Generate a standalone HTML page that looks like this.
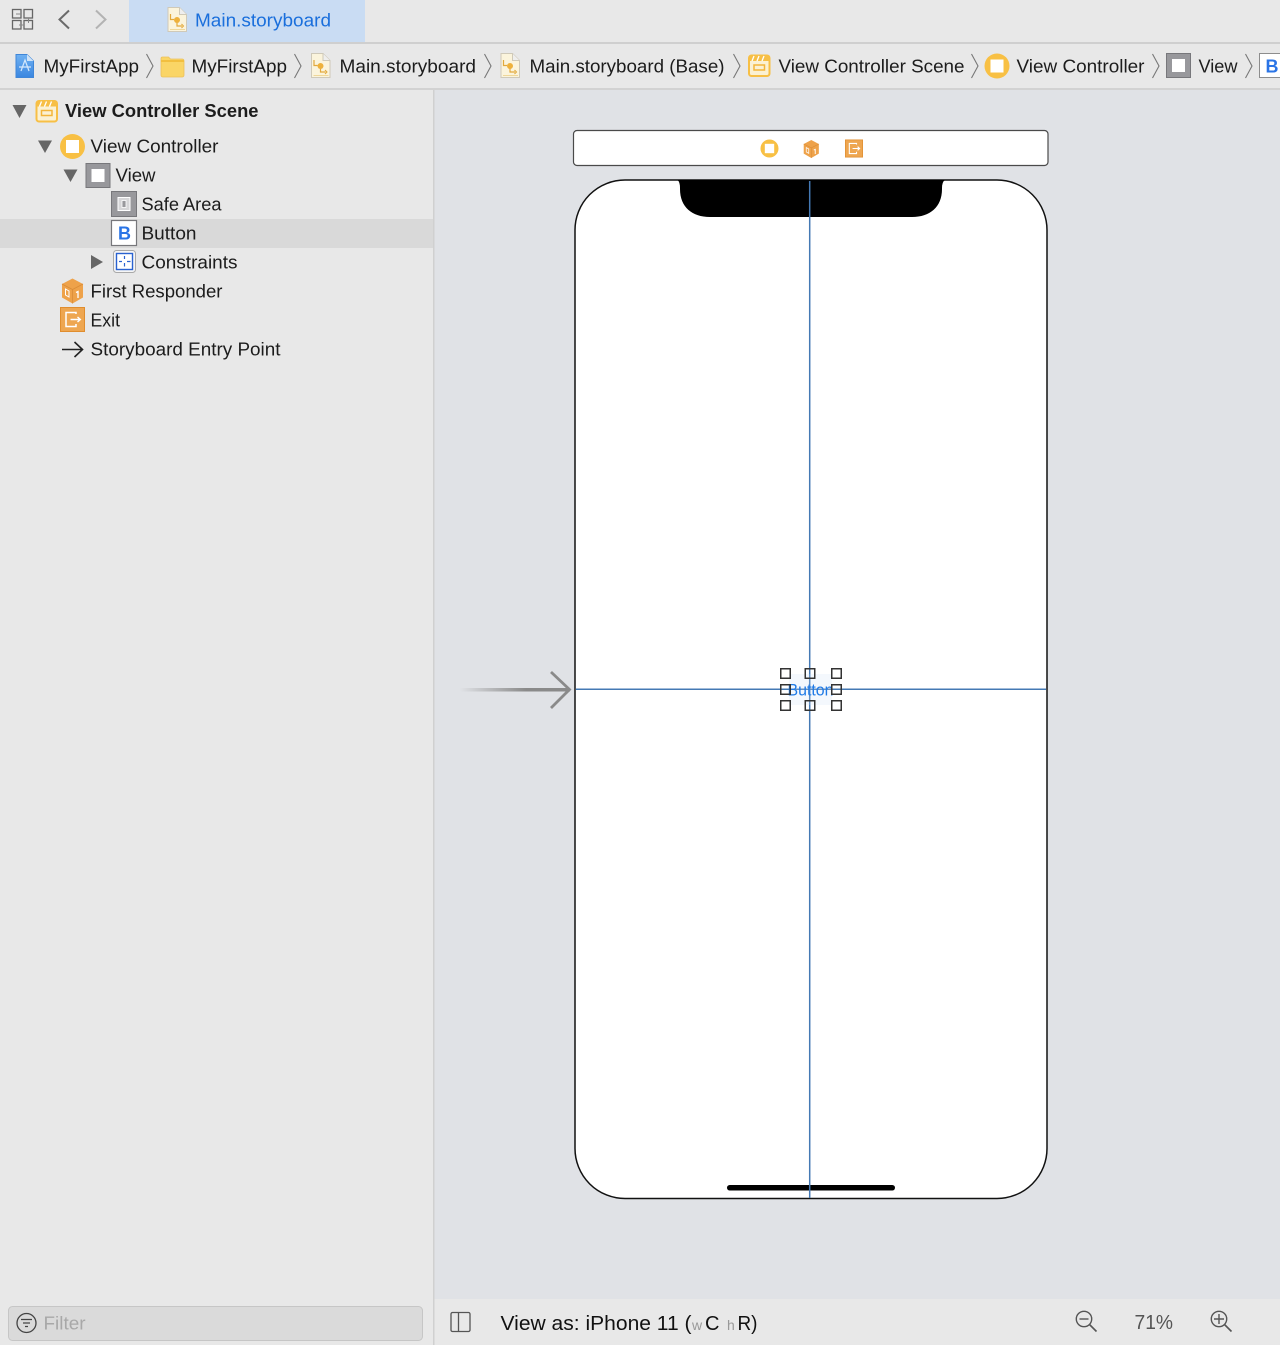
<!DOCTYPE html>
<html lang="en"><head><meta charset="utf-8"><title>Main.storyboard</title>
<style>
html,body{margin:0;padding:0;background:#e8e8e8}
svg{display:block}
text{font-family:"Liberation Sans",sans-serif;font-size:18px;fill:#1c1c1c}
</style></head><body>
<svg xmlns="http://www.w3.org/2000/svg" width="1280" height="1345" viewBox="0 0 1280 1345">
<defs>
<linearGradient id="tail" x1="0" x2="1" y1="0" y2="0"><stop offset="0" stop-color="#8a8a8a" stop-opacity="0"/><stop offset=".6" stop-color="#8a8a8a"/><stop offset="1" stop-color="#8a8a8a"/></linearGradient>
<linearGradient id="blue" x1="0" x2="0" y1="0" y2="1"><stop offset="0" stop-color="#6fb1f2"/><stop offset="1" stop-color="#3a86e0"/></linearGradient>
<g id="doc"><path d="M1.500 .5H13L20 7.500V24.500H1.500Z" fill="#fbf4dc" stroke="#cfc9b8"/><path d="M13 .5V7.500H20" fill="#eee" stroke="#cfc9b8"/><path d="M4 7V12.500H7.500M10.500 13V19H15.500" fill="none" stroke="#e2a93c" stroke-width="1.200"/><circle cx="10.500" cy="13" r="3" fill="#eeb13c"/><path d="M15 17l2 2-2 2" fill="none" stroke="#e2a93c"/><path d="M3.500 22.500H18.500" stroke="#efd79a"/></g>
<g id="sep"><path d="M.5 0L7 12L.5 24" fill="none" stroke="#777" stroke-width="1.100"/></g>
<g id="scene"><rect x="1" y="1" width="20.500" height="20.500" rx="2.500" fill="#fbf1d2" stroke="#f7bf45" stroke-width="2"/><path d="M1 1H21.500V6.500H1Z" fill="#f7bf45"/><path d="M4 6.500L6 1.500M9 6.500L11 1.500M14 6.500L16 1.500" stroke="#fff" stroke-width="1.300"/><rect x="6" y="10.500" width="10.500" height="5" fill="none" stroke="#f3b53a" stroke-width="1.500"/></g>
<g id="vc"><circle cx="12.500" cy="12.500" r="12.500" fill="#f8c044"/><rect x="6" y="6" width="13" height="13" fill="#fff"/></g>
<g id="view"><rect x="0" y="0" width="25" height="25" fill="#98989c"/><rect x=".5" y=".5" width="24" height="24" fill="none" stroke="#77777b"/><rect x="6" y="6" width="13" height="13" fill="#fff"/></g>
<g id="cube"><path d="M11.500 0L22 5.500V19L11.500 25L1 19V5.500Z" fill="#eea24a"/><path d="M1 5.500L11.500 11V25M22 5.500L11.500 11" fill="none" stroke="#d98c38" stroke-width=".8"/><path d="M4.500 10.500L8 12.500V18.500L4.500 16.500Z" fill="none" stroke="#fff" stroke-width="1"/><path d="M15 14l2-1V19.500" fill="none" stroke="#fff" stroke-width="1.300"/></g>
<g id="exit"><rect x="0" y="0" width="25" height="25" fill="#eea650"/><rect x=".5" y=".5" width="24" height="24" fill="none" stroke="#e08d2e"/><path d="M16 7V5.500H6V19.500H16V17" fill="none" stroke="#fff" stroke-width="1.500"/><path d="M10.500 12.500H20M17.500 10l2.800 2.500-2.800 2.500" fill="none" stroke="#fff" stroke-width="1.500"/></g>
<g id="lens"><circle cx="9" cy="9" r="7.700" fill="none" stroke="#555" stroke-width="1.400"/><path d="M14.500 14.500L21.500 21.500" stroke="#555" stroke-width="1.600"/></g>
</defs>

<rect width="1280" height="1345" fill="#e8e8e8"/>
<!-- top tab bar -->
<rect x="129" y="0" width="236" height="42" fill="#c9dcf3"/>
<rect y="42" width="1280" height="2" fill="#cfcfcf"/>
<g fill="none" stroke="#666" stroke-width="1.300">
<rect x="12.500" y="9.500" width="8.500" height="8.500"/><rect x="24" y="9.500" width="8.500" height="8.500"/><rect x="12.500" y="20.500" width="8.500" height="8.500"/><rect x="24" y="20.500" width="8.500" height="8.500"/>
</g>
<path d="M16 14H21M28.500 18V23M24 25H19" fill="none" stroke="#888" stroke-width="1"/>
<path d="M69 10.500L59.500 19.500L69 28.500" fill="none" stroke="#6a6a6a" stroke-width="2"/>
<path d="M96 10.500L105.500 19.500L96 28.500" fill="none" stroke="#b3b3b3" stroke-width="2"/>
<use href="#doc" x="166.500" y="7"/>
<text x="195" y="26.500" textLength="136" lengthAdjust="spacingAndGlyphs" style="fill:#1a6fdc">Main.storyboard</text>

<!-- breadcrumb -->
<rect y="88" width="1280" height="2" fill="#d2d2d2"/>
<path d="M16 54.500H27L33.500 61V77.500H16Z" fill="url(#blue)" stroke="#3f86d8"/><path d="M27 54.500V61H33.500" fill="#cfe3f8"/>
<path d="M21 71L25 60L29 71M19 67H31" fill="none" stroke="#d5e8fb" stroke-width="1.200"/>
<text x="43.500" y="72.500" textLength="95.500" lengthAdjust="spacingAndGlyphs">MyFirstApp</text>
<use href="#sep" x="146" y="54"/>
<path d="M161 58.500q0-1.500 1.500-1.500h6l2 2h11.500q2 0 2 2v14q0 2-2 2h-19q-2 0-2-2z" fill="#fad566" stroke="#ecc05a" stroke-width=".8"/><rect x="161" y="60" width="23" height="2" fill="#f2bf3f"/>
<text x="191.500" y="72.500" textLength="95.500" lengthAdjust="spacingAndGlyphs">MyFirstApp</text>
<use href="#sep" x="294" y="54"/>
<use href="#doc" x="310" y="53"/>
<text x="339.500" y="72.500" textLength="136.500" lengthAdjust="spacingAndGlyphs">Main.storyboard</text>
<use href="#sep" x="484" y="54"/>
<use href="#doc" x="499.500" y="53"/>
<text x="529.500" y="72.500" textLength="195" lengthAdjust="spacingAndGlyphs">Main.storyboard (Base)</text>
<use href="#sep" x="733" y="54"/>
<use href="#scene" x="748" y="54.500"/>
<text x="778.500" y="72.500" textLength="186" lengthAdjust="spacingAndGlyphs">View Controller Scene</text>
<use href="#sep" x="971" y="54"/>
<use href="#vc" x="984.500" y="53.500"/>
<text x="1016.500" y="72.500" textLength="128" lengthAdjust="spacingAndGlyphs">View Controller</text>
<use href="#sep" x="1152" y="54"/>
<use href="#view" x="1166" y="53"/>
<text x="1198.500" y="72.500" textLength="39" lengthAdjust="spacingAndGlyphs">View</text>
<use href="#sep" x="1245" y="54"/>
<rect x="1259.500" y="53.500" width="30" height="24" fill="#fff" stroke="#8d8d8d"/>
<text x="1265.500" y="72.500" style="fill:#2a74e6;font-weight:bold">B</text>

<!-- canvas -->
<rect x="433" y="90" width="847" height="1209" fill="#e0e2e6"/>
<rect x="433" y="90" width="1.500" height="1255" fill="#d0d0d0"/>

<!-- outline -->
<rect x="0" y="219" width="433" height="29" fill="#d9d9d9"/>
<g fill="#666">
<path d="M12.500 105H26.500L19.500 118Z"/>
<path d="M38 140.500H52L45 153Z"/>
<path d="M63.500 169.500H77.500L70.500 182Z"/>
<path d="M91 255V269L103 262Z"/>
</g>
<use href="#scene" x="35.500" y="100"/>
<text x="65" y="117" textLength="193.500" lengthAdjust="spacingAndGlyphs" style="font-weight:bold">View Controller Scene</text>
<use href="#vc" x="60" y="134"/>
<text x="90.500" y="152.500" textLength="128" lengthAdjust="spacingAndGlyphs">View Controller</text>
<use href="#view" x="85.500" y="163"/>
<text x="115.500" y="181.500" textLength="40" lengthAdjust="spacingAndGlyphs">View</text>
<rect x="111.500" y="191.500" width="25" height="25" fill="#98989c" stroke="#77777b"/>
<rect x="118" y="197.500" width="12" height="13" fill="#d6d6d8" stroke="#fff"/><rect x="122" y="200.500" width="4" height="7" fill="#98989c" stroke="#fff" stroke-width=".8"/>
<text x="141.500" y="210.500" textLength="80" lengthAdjust="spacingAndGlyphs">Safe Area</text>
<rect x="111.500" y="220.500" width="25" height="25" fill="#fff" stroke="#77777b" stroke-width="1.200"/>
<text x="118" y="239.500" style="fill:#2a74e6;font-weight:bold">B</text>
<text x="141.500" y="239.500" textLength="55" lengthAdjust="spacingAndGlyphs">Button</text>
<rect x="113.500" y="250.500" width="22" height="22" rx="3" fill="#f6f6f6" stroke="#a9a9a9"/>
<rect x="116.500" y="253.500" width="16" height="16" fill="#fff" stroke="#2a62d0" stroke-width="1.400"/>
<path d="M124.500 256v3M124.500 263v3.500M119 261.500h3M127 261.500h3.500" stroke="#2a62d0" stroke-width="1.200"/>
<text x="141.500" y="268.500" textLength="96" lengthAdjust="spacingAndGlyphs">Constraints</text>
<use href="#cube" x="61" y="278.500"/>
<text x="90.500" y="297.500" textLength="132" lengthAdjust="spacingAndGlyphs">First Responder</text>
<use href="#exit" x="60" y="307"/>
<text x="90.500" y="326.500" textLength="29.500" lengthAdjust="spacingAndGlyphs">Exit</text>
<path d="M62 349.500H82M74.500 342L82.500 349.500L74.500 357" fill="none" stroke="#222" stroke-width="1.600"/>
<text x="90.500" y="355.500" textLength="190" lengthAdjust="spacingAndGlyphs">Storyboard Entry Point</text>

<!-- scene dock -->
<rect x="573.500" y="130.500" width="474.500" height="35" rx="3.500" fill="#fff" stroke="#4a4a4a" stroke-width="1.200"/>
<g transform="translate(760.500,139.500) scale(.72)"><use href="#vc"/></g>
<g transform="translate(803,140) scale(.72)"><use href="#cube"/></g>
<g transform="translate(845,139.500) scale(.72)"><use href="#exit"/></g>

<!-- device -->
<rect x="575" y="180" width="472" height="1018.500" rx="50" fill="#fff" stroke="#111" stroke-width="1.500"/>
<path d="M677.500 180H945Q942 182 942 188V189C942 207 930 217 912 217H710C692 217 680 207 680 189V188Q680 182 677.500 180Z" fill="#000"/>
<rect x="727" y="1185" width="168" height="5.500" rx="2.750" fill="#000"/>

<!-- guides -->
<path d="M809.700 181V1198" stroke="#4479b4" stroke-width="1.500"/>
<path d="M576 689.300H1046" stroke="#4479b4" stroke-width="1.500"/>
<rect x="789" y="674" width="43" height="31" fill="#cfe0f4" opacity=".22"/>
<text x="787.500" y="695.500" textLength="46" lengthAdjust="spacingAndGlyphs" style="fill:#1f7ae6;font-size:17px">Button</text>
<g fill="none" stroke="#333" stroke-width="1.500">
<rect x="780.750" y="668.750" width="9.500" height="9.500"/><rect x="805.250" y="668.750" width="9.500" height="9.500"/><rect x="831.750" y="668.750" width="9.500" height="9.500"/>
<rect x="780.750" y="684.750" width="9.500" height="9.500"/><rect x="831.750" y="684.750" width="9.500" height="9.500"/>
<rect x="780.750" y="700.750" width="9.500" height="9.500"/><rect x="805.250" y="700.750" width="9.500" height="9.500"/><rect x="831.750" y="700.750" width="9.500" height="9.500"/>
</g>

<!-- entry arrow -->
<rect x="460" y="688" width="110" height="3.500" fill="url(#tail)"/>
<path d="M551 672L569.500 689.500L551 708" fill="none" stroke="#8a8a8a" stroke-width="2.800"/>

<!-- bottom bars -->
<rect x="434.500" y="1299" width="845.500" height="46" fill="#e8e8e8"/>
<rect x="8.500" y="1306.500" width="414" height="34" rx="4" fill="#dadada" stroke="#c6c6c6"/>
<circle cx="26.500" cy="1323" r="9.500" fill="none" stroke="#444" stroke-width="1.300"/>
<path d="M21 1319.500H32M23 1323H30M25 1326.500H28" stroke="#444" stroke-width="1.300"/>
<text x="43.500" y="1329.500" textLength="42" lengthAdjust="spacingAndGlyphs" style="fill:#a8a8a8">Filter</text>
<rect x="451" y="1312.500" width="19" height="19" rx="1.500" fill="none" stroke="#555" stroke-width="1.300"/>
<path d="M458.500 1312.500V1331.500" stroke="#555" stroke-width="1.300"/>
<text x="500.500" y="1330" textLength="191" lengthAdjust="spacingAndGlyphs" style="font-size:20px;fill:#111">View as: iPhone 11 (</text>
<text x="692" y="1330" style="font-size:14px;fill:#999">w</text>
<text x="705" y="1330" style="font-size:20px;fill:#111">C</text>
<text x="727" y="1330" style="font-size:14px;fill:#999">h</text>
<text x="737.500" y="1330" textLength="20" lengthAdjust="spacingAndGlyphs" style="font-size:20px;fill:#111">R)</text>
<use href="#lens" x="1075" y="1310"/>
<path d="M1079.500 1319H1088.500" stroke="#555" stroke-width="1.400"/>
<text x="1134.500" y="1329" textLength="38.500" lengthAdjust="spacingAndGlyphs" style="font-size:20px;fill:#555">71%</text>
<use href="#lens" x="1210" y="1310"/>
<path d="M1214 1319H1224M1219 1314V1324" stroke="#555" stroke-width="1.400"/>
</svg>
</body></html>
